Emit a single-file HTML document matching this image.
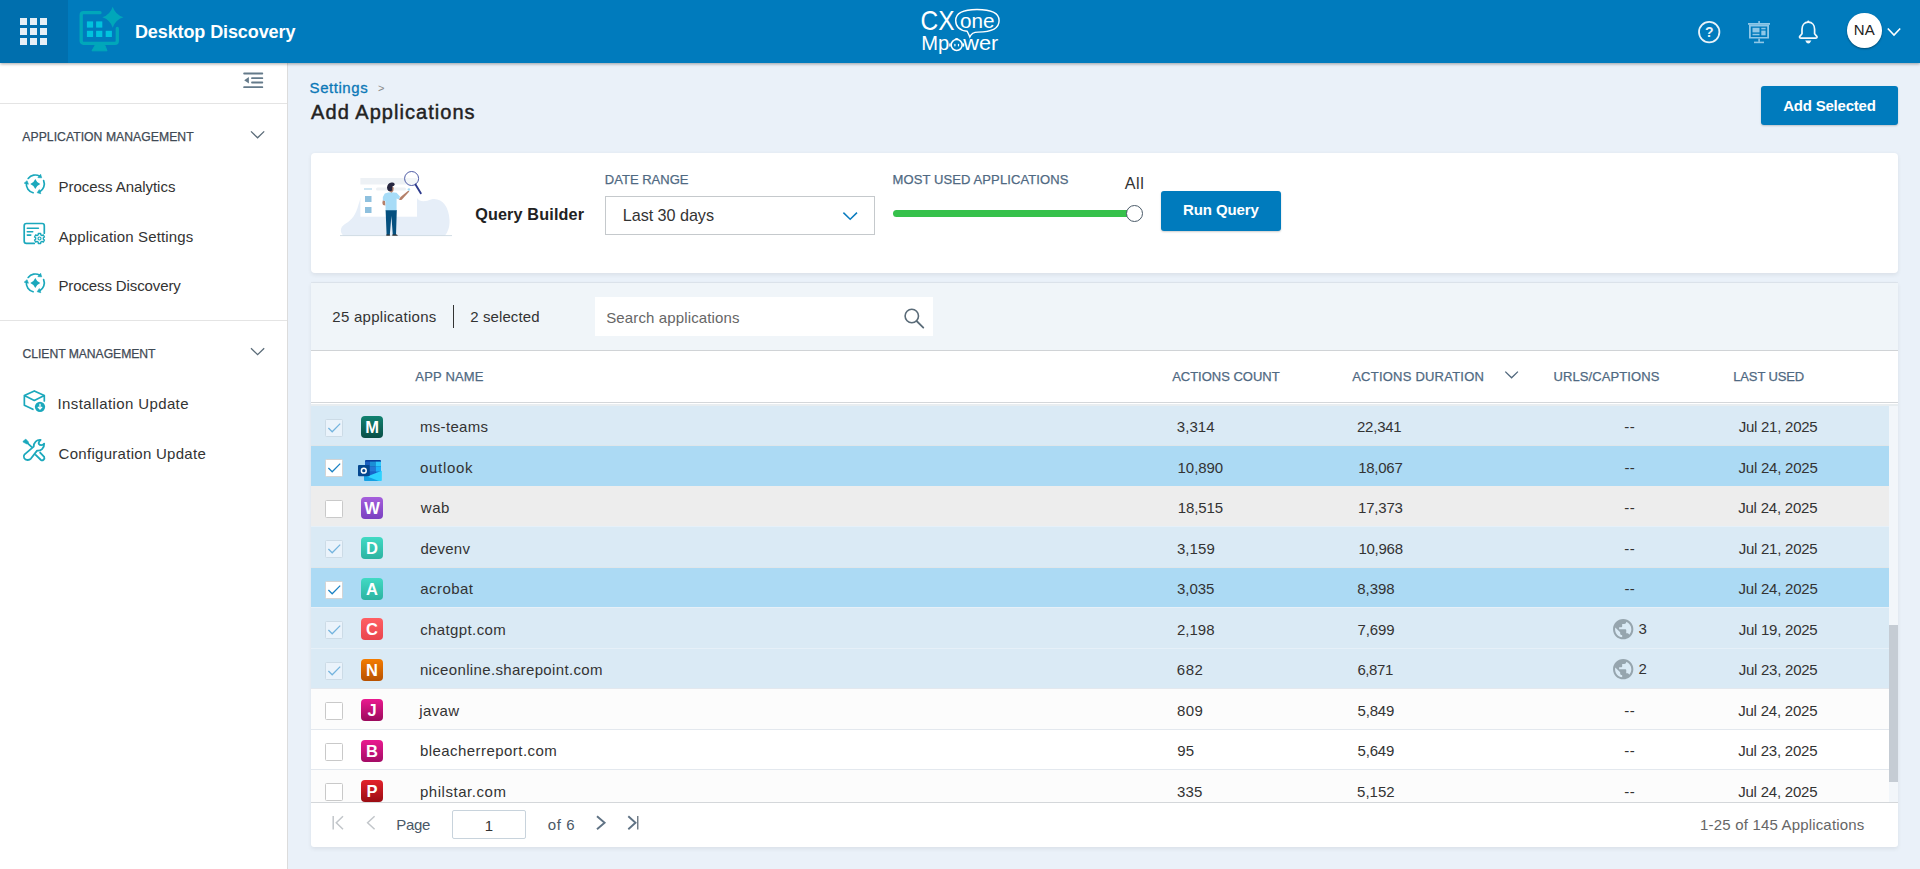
<!DOCTYPE html>
<html lang="en">
<head>
<meta charset="utf-8">
<title>Desktop Discovery - Add Applications</title>
<style>
*{box-sizing:border-box;margin:0;padding:0}
html,body{width:1920px;height:869px;overflow:hidden}
body{font-family:"Liberation Sans","DejaVu Sans",sans-serif;font-size:15px;color:#333;background:#eaf1f9;position:relative}
.abs{position:absolute}
.t{position:absolute;white-space:nowrap;line-height:1}
svg{position:absolute;overflow:visible}
/* header */
#top{position:absolute;left:0;top:0;width:1920px;height:63px;background:#007bbd;box-shadow:0 1px 3px rgba(0,0,0,.35);z-index:5}
#grid{position:absolute;left:0;top:0;width:68px;height:63px;background:#006fae}
#grid i{position:absolute;width:7px;height:7px;background:#e6eff6}
#title{left:136px;top:23px;font-size:18px;font-weight:bold;color:#fff}
#avatar{position:absolute;left:1847px;top:13px;width:34.500px;height:34.500px;border-radius:50%;background:#fff;box-shadow:0 1px 2px rgba(0,0,0,.4)}
#avatar .t{left:0;width:34.500px;text-align:center;top:8.500px;font-size:15px;color:#222}
/* sidebar */
#side{position:absolute;left:0;top:63px;width:288px;height:806px;background:#fff;border-right:1px solid #dcdcdc}
.sec{font-size:12.200px;color:#3f4a55;left:22.500px;-webkit-text-stroke:.25px #3f4a55}
.nav{font-size:15px;color:#333;left:59px}
.hr{position:absolute;left:0;width:287px;height:1px;background:#e4e4e4}
/* main */
#crumb{left:311px;top:80px;font-size:15px;color:#0b78b7;-webkit-text-stroke:.3px #0b78b7}
#crumb2{left:378px;top:82.500px;font-size:11px;color:#888}
#h1{left:311px;top:102px;font-size:20px;color:#222;-webkit-text-stroke:.45px #222}
.btn{position:absolute;background:#007bbd}
.bt{color:#fff;font-weight:bold;font-size:15px}
.card{position:absolute;background:#fff;border-radius:4px;box-shadow:0 1.500px 4px rgba(0,0,0,.07)}
.lbl{font-size:13px;color:#4f6982;-webkit-text-stroke:.25px #4f6982}
.th{font-size:13px;color:#4f6982;top:370px;-webkit-text-stroke:.25px #4f6982}
#rows{position:absolute;left:311px;top:404.800px;width:1578px;height:397.200px;overflow:hidden}
.row{position:absolute;left:0;width:1578px;height:40.500px;border-top:1px solid #e1e8ed}
.r-dis{background:#daeaf5;border-top-color:#e6f0f8}.r-sel{background:#acdaf4;border-top-color:#dfe6ea}.r-hov{background:#ededed;border-top-color:#ededed}.r-n0{background:#fff;border-top-color:#e3e8ee}.r-n1{background:#fcfcfc;border-top-color:#e3e8ee}
.row .t{top:13.300px;font-size:15px;color:#333}
.cn{left:110px}.cc{left:867px}.cd{left:1047px}.cu{left:1314.500px}.cu2{left:1328px;margin-top:-1px}.cl{left:1428px}
.cb{position:absolute;left:14px;top:13px;width:18px;height:18px;background:#fff;border:1px solid #c9c9c9;border-radius:1.500px}
.cb svg{left:-1px;top:-1px;width:18px;height:18px}
.cb-dis{background:#eaf3fb;border-color:#ccdbe6}
.cb-sel{border-color:#d4d4d4}
.ic{position:absolute;left:50px;top:10px;width:22px;height:22px;border-radius:4px;color:#fff;font-weight:bold;font-size:16.500px;text-align:center;line-height:22px}
.olk{left:47px;top:14px;width:24px;height:22px}
.globe{left:1299.500px;top:8.500px;width:24.400px;height:24.400px}
.row:first-child{border-top-color:#e8edf0}
#addsel{letter-spacing:-0.211px;margin-left:1.160px}
#all{letter-spacing:0.556px;margin-left:0.230px}
#app25{letter-spacing:0.279px;margin-left:-0.700px}
#crumb{letter-spacing:0.556px;margin-left:-1.430px}
#dr{letter-spacing:0.016px;margin-left:-1.190px}
#h1{letter-spacing:1.042px;margin-left:0.120px}
#l30{letter-spacing:-0.052px;margin-left:-0.720px}
#mua{letter-spacing:0.113px;margin-left:-1.040px}
#navAS{letter-spacing:0.144px;margin-left:-0.290px}
#navCU{letter-spacing:0.288px;margin-left:-0.450px}
#navIU{letter-spacing:0.375px;margin-left:-1.500px}
#navPA{letter-spacing:-0.041px;margin-left:-0.530px}
#navPD{letter-spacing:-0.111px;margin-left:-0.620px}
#of6{letter-spacing:0.580px;margin-left:-0.220px}
#page{letter-spacing:-0.291px;margin-left:-0.740px}
#qb{letter-spacing:0.152px;margin-left:-0.330px}
#r0c{letter-spacing:0.036px;margin-left:-1.180px}
#r0d{letter-spacing:-0.230px;margin-left:-1.040px}
#r0l{letter-spacing:-0.240px;margin-left:-0.380px}
#r0n{letter-spacing:0.340px;margin-left:-1.120px}
#r0u{letter-spacing:0.582px;margin-left:-1.340px}
#r1c{letter-spacing:-0.072px;margin-left:-0.410px}
#r1d{letter-spacing:-0.272px;margin-left:0.230px}
#r1l{letter-spacing:-0.227px;margin-left:-0.490px}
#r1n{letter-spacing:0.652px;margin-left:-0.900px}
#r1u{letter-spacing:0.168px;margin-left:-0.990px}
#r2c{letter-spacing:-0.102px;margin-left:-0.270px}
#r2d{letter-spacing:-0.215px;margin-left:0.060px}
#r2l{letter-spacing:-0.211px;margin-left:-0.840px}
#r2n{letter-spacing:0.493px;margin-left:-0.160px}
#r2u{letter-spacing:0.589px;margin-left:-1.390px}
#r3c{letter-spacing:0.098px;margin-left:-1.130px}
#r3d{letter-spacing:-0.256px;margin-left:0.440px}
#r3l{letter-spacing:-0.240px;margin-left:-0.380px}
#r3n{letter-spacing:0.220px;margin-left:-0.580px}
#r3u{letter-spacing:0.582px;margin-left:-1.340px}
#r4c{letter-spacing:-0.020px;margin-left:-1.060px}
#r4d{letter-spacing:-0.022px;margin-left:-0.760px}
#r4l{letter-spacing:-0.227px;margin-left:-0.490px}
#r4n{letter-spacing:0.411px;margin-left:-0.690px}
#r4u{letter-spacing:0.168px;margin-left:-0.990px}
#r5c{letter-spacing:-0.004px;margin-left:-1.050px}
#r5d{letter-spacing:-0.132px;margin-left:-0.430px}
#r5l{letter-spacing:-0.240px;margin-left:-0.380px}
#r5n{letter-spacing:0.383px;margin-left:-0.770px}
#r5u{letter-spacing:0.000px;margin-left:-0.630px}
#r6c{letter-spacing:0.511px;margin-left:-1.150px}
#r6d{letter-spacing:-0.431px;margin-left:-0.550px}
#r6l{letter-spacing:-0.240px;margin-left:-0.380px}
#r6n{letter-spacing:0.345px;margin-left:-1.120px}
#r6u{letter-spacing:0.000px;margin-left:-0.490px}
#r7c{letter-spacing:0.396px;margin-left:-1.090px}
#r7d{letter-spacing:-0.186px;margin-left:-0.490px}
#r7l{letter-spacing:-0.211px;margin-left:-0.840px}
#r7n{letter-spacing:0.367px;margin-left:-1.760px}
#r7u{letter-spacing:0.591px;margin-left:-1.390px}
#r8c{letter-spacing:0.326px;margin-left:-0.870px}
#r8d{letter-spacing:-0.186px;margin-left:-0.490px}
#r8l{letter-spacing:-0.211px;margin-left:-0.840px}
#r8n{letter-spacing:0.448px;margin-left:-1.090px}
#r8u{letter-spacing:0.585px;margin-left:-1.390px}
#r9c{letter-spacing:0.229px;margin-left:-1.100px}
#r9d{letter-spacing:-0.007px;margin-left:-0.930px}
#r9l{letter-spacing:-0.211px;margin-left:-0.840px}
#r9n{letter-spacing:0.538px;margin-left:-1.080px}
#r9u{letter-spacing:0.591px;margin-left:-1.390px}
#rq{letter-spacing:-0.096px;margin-left:-0.000px}
#search{letter-spacing:0.132px;margin-left:-0.780px}
#secA{letter-spacing:0.043px;margin-left:-0.210px}
#secC{letter-spacing:-0.055px;margin-left:0.070px}
#sel2{letter-spacing:0.109px;margin-left:-0.320px}
#thAC{letter-spacing:-0.006px;margin-left:0.150px}
#thAD{letter-spacing:0.222px;margin-left:0.230px}
#thAN{letter-spacing:0.172px;margin-left:0.370px}
#thLU{letter-spacing:-0.135px;margin-left:-1.280px}
#thUC{letter-spacing:0.087px;margin-left:-0.930px}
#title{letter-spacing:-0.097px;margin-left:-1.100px}
#total{letter-spacing:0.177px;margin-left:-0.910px}
</style>
</head>
<body>
<div id="top">
  <div id="grid">
    <i style="left:20px;top:18px"></i><i style="left:30px;top:18px"></i><i style="left:40px;top:18px"></i>
    <i style="left:20px;top:28px"></i><i style="left:30px;top:28px"></i><i style="left:40px;top:28px"></i>
    <i style="left:20px;top:38px"></i><i style="left:30px;top:38px"></i><i style="left:40px;top:38px"></i>
  </div>
  <svg id="appicon" style="left:76px;top:4px" width="52" height="52" viewBox="76 4 52 52">
    <path d="M100 12.700 H83.500 a2.300 2.300 0 0 0 -2.300 2.300 V41 a2.300 2.300 0 0 0 2.300 2.300 H115 a2.300 2.300 0 0 0 2.300 -2.300 V28.500" fill="none" stroke="#00a7ba" stroke-width="3.300" stroke-linecap="round"/>
    <path d="M95.500 44.500 H104.500 L107 50.800 H92 Z" fill="#00a7ba" stroke="#00a7ba" stroke-width="1" stroke-linejoin="round"/>
    <path d="M112.700 6.800 Q115.200 14.800 123.500 17.300 Q115.200 19.800 112.700 27.800 Q110.200 19.800 102.400 17.300 Q110.200 14.800 112.700 6.800 Z" fill="#00a7ba"/>
    <g fill="#00c3dd"><rect x="86.900" y="21.400" width="6.200" height="6.200"/><rect x="96.100" y="21.400" width="6.200" height="6.200"/>
    <rect x="86.900" y="30.800" width="6.200" height="6.200"/><rect x="96.100" y="30.800" width="6.200" height="6.200"/><rect x="105.700" y="30.800" width="6.200" height="6.200"/></g>
  </svg>
  <div class="t" id="title">Desktop Discovery</div>

  <svg id="logo" style="left:915px;top:4px" width="90" height="52" viewBox="915 4 90 52" fill="#fff" font-family="Liberation Sans, sans-serif">
    <text x="920.500" y="29.800" font-size="28" textLength="34" lengthAdjust="spacingAndGlyphs">CX</text>
    <path d="M977 9.500 C963 9.500 955.700 13 955.700 20.500 C955.700 27 960 30.500 967.200 31.300 C968.200 33 969 35.200 969.800 37 C971 34 973.500 32.100 978 32.100 C992 32.100 999.100 28.500 999.100 20.500 C999.100 13 992 9.500 977 9.500 Z" fill="none" stroke="#fff" stroke-width="1.400"/>
    <text x="960" y="27.600" font-size="21" textLength="34.500" lengthAdjust="spacingAndGlyphs">one</text>
    <text x="921.300" y="49.700" font-size="20" textLength="28" lengthAdjust="spacingAndGlyphs">Mp</text>
    <circle cx="956.700" cy="45" r="5.500" fill="none" stroke="#fff" stroke-width="1.500"/>
    <rect x="949.200" y="43.200" width="1.500" height="3.600" rx=".75"/><rect x="962.700" y="43.200" width="1.500" height="3.600" rx=".75"/>
    <path d="M954.900 39.600 Q956.700 37.300 958.500 39.600" fill="none" stroke="#fff" stroke-width="1.100"/>
    <rect x="954.300" y="43.800" width="1.200" height="2.600" rx=".6"/><rect x="957.900" y="43.800" width="1.200" height="2.600" rx=".6"/>
    <text x="963.300" y="49.700" font-size="20" textLength="35" lengthAdjust="spacingAndGlyphs">wer</text>
  </svg>

  <svg id="help" style="left:1697px;top:20px" width="24" height="24" viewBox="1697 20 24 24">
    <circle cx="1709.200" cy="32.100" r="10.200" fill="none" stroke="#e8f2f9" stroke-width="1.800"/>
    <text x="1709.200" y="37.100" font-size="14" font-weight="bold" text-anchor="middle" fill="#e8f2f9" font-family="Liberation Sans, sans-serif">?</text>
  </svg>
  <svg id="pres" style="left:1747px;top:20px" width="24" height="24" viewBox="1747 20 24 24" fill="#8fc7e7">
    <rect x="1758.300" y="21" width="1.600" height="2.500"/>
    <rect x="1748" y="23" width="22" height="1.800"/>
    <path d="M1749 24.800 H1769 V38.600 H1749 Z M1750.800 26.400 V37 H1767.200 V26.400 Z" fill-rule="evenodd"/>
    <rect x="1752.500" y="27.800" width="7" height="4.600"/><rect x="1752.500" y="33.800" width="7" height="1.500"/>
    <rect x="1761.300" y="27.800" width="4.300" height="1.500"/><rect x="1761.300" y="30.600" width="4.300" height="4.700"/>
    <rect x="1758.300" y="38.600" width="1.600" height="3.300"/><rect x="1754" y="41.600" width="10" height="1.600"/>
  </svg>
  <svg id="bell" style="left:1797px;top:20px" width="24" height="24" viewBox="1797 20 24 24">
    <path d="M1808.300 22.200 C1804.300 22.200 1802 25.300 1802 29.300 V33.800 L1799.600 36.600 Q1799.300 38.200 1801 38.200 H1815.600 Q1817.300 38.200 1817 36.600 L1814.600 33.800 V29.300 C1814.600 25.300 1812.300 22.200 1808.300 22.200 Z" fill="none" stroke="#f2f8fc" stroke-width="1.700" stroke-linejoin="round"/>
    <path d="M1805.200 40.400 H1811.400 Q1810 43.600 1808.300 43.600 Q1806.600 43.600 1805.200 40.400 Z" fill="#f2f8fc"/>
    <circle cx="1808.300" cy="21.700" r="1.100" fill="#f2f8fc"/>
  </svg>
  <div id="avatar"><div class="t">NA</div></div>
  <svg style="left:1887px;top:27px" width="14" height="10" viewBox="1887 27 14 10"><path d="M1887.800 28.500 L1894 35 L1900.200 28.500" fill="none" stroke="#fff" stroke-width="1.600"/></svg>
</div>

<div id="side">
  <!-- coords inside sidebar are page y - 63 -->
  <svg style="left:242px;top:8px" width="22" height="18" viewBox="242 71 22 18" fill="#647a8a">
    <rect x="243.200" y="72.600" width="20" height="1.900" rx=".9"/><rect x="251.100" y="77.200" width="12.100" height="1.900" rx=".9"/><rect x="251.100" y="81.600" width="12.100" height="1.900" rx=".9"/><rect x="243.200" y="86.200" width="20" height="1.900" rx=".9"/>
    <path d="M244.200 80.300 L248.900 77.100 V83.600 Z"/>
  </svg>
  <div class="hr" style="top:40px"></div>
  <div class="t sec" id="secA" style="top:68px">APPLICATION MANAGEMENT</div>
  <svg style="left:250px;top:67px" width="16" height="10" viewBox="250 130 16 10"><path d="M251 131.400 L257.600 137.800 L264.200 131.400" fill="none" stroke="#5a6b78" stroke-width="1.300"/></svg>
  <div class="t nav" id="navPA" style="top:116px">Process Analytics</div>
  <div class="t nav" id="navAS" style="top:166px">Application Settings</div>
  <div class="t nav" id="navPD" style="top:215px">Process Discovery</div>
  <div class="hr" style="top:257px"></div>
  <div class="t sec" id="secC" style="top:285px">CLIENT MANAGEMENT</div>
  <svg style="left:250px;top:284px" width="16" height="10" viewBox="250 347 16 10"><path d="M251 348.300 L257.600 354.700 L264.200 348.300" fill="none" stroke="#5a6b78" stroke-width="1.300"/></svg>
  <div class="t nav" id="navIU" style="top:333px">Installation Update</div>
  <div class="t nav" id="navCU" style="top:383px">Configuration Update</div>
</div>

<div class="t" id="crumb">Settings</div>
<div class="t" id="crumb2">&gt;</div>
<div class="t" id="h1">Add Applications</div>
<div class="btn" style="left:1761px;top:86px;width:137px;height:39px;border-radius:3px;box-shadow:0 1px 2px rgba(0,0,0,.2)"></div><div class="t bt" id="addsel" style="left:1782px;top:98px">Add Selected</div>

<div class="card" style="left:311px;top:153px;width:1587px;height:120px"></div>
<div class="t" id="qb" style="left:475.500px;top:206px;font-size:16.200px;font-weight:bold;color:#222">Query Builder</div>
<div class="t lbl" id="dr" style="left:606px;top:172.700px">DATE RANGE</div>
<div class="abs" style="left:605px;top:196px;width:270px;height:39px;border:1px solid #c5c9cc;background:#fff"></div>
<div class="t" id="l30" style="left:623.500px;top:206.500px;font-size:16.200px;color:#333">Last 30 days</div>
<svg style="left:842px;top:211px" width="16" height="10" viewBox="842 211 16 10"><path d="M843.400 212.600 L850.200 219.300 L857 212.600" fill="none" stroke="#0b7cbf" stroke-width="1.500"/></svg>
<div class="t lbl" id="mua" style="left:893.500px;top:172.700px">MOST USED APPLICATIONS</div>
<div class="t" id="all" style="left:1124.500px;top:175px;font-size:16.200px;color:#333">All</div>
<div class="abs" style="left:893px;top:210px;width:241px;height:7px;border-radius:3.500px;background:#36c14b"></div>
<div class="abs" style="left:1126px;top:205px;width:17px;height:17px;border-radius:50%;background:#fff;border:1.500px solid #4a5a68"></div>
<div class="btn" style="left:1161px;top:191px;width:120px;height:39.500px;border-radius:3px;box-shadow:0 1px 2px rgba(0,0,0,.2)"></div><div class="t bt" id="rq" style="left:1183px;top:202.300px">Run Query</div>

<div class="abs" style="left:311px;top:282px;width:1587px;height:1px;background:rgba(0,0,0,.045)"></div>
<div class="card" style="left:311px;top:283px;width:1587px;height:564px;overflow:hidden;border-radius:0 0 3px 3px">
  <div class="abs" style="left:0;top:0;width:1587px;height:68px;background:#f0f5f9;border-bottom:1px solid #d0d3d6"></div>
  <div class="abs" style="left:0;top:119px;width:1587px;height:1px;background:#d4d7da"></div>
  <div class="abs" style="left:0;top:121px;width:1587px;height:2px;background:#e8edf0"></div>
  <div class="abs" style="left:1578px;top:123px;width:9px;height:396px;background:#f2f6fa"></div>
  <div class="abs" style="left:1578px;top:342px;width:9px;height:157px;background:#c5ccd4"></div>
  <div class="abs" style="left:0;top:519px;width:1587px;height:1px;background:#d4d7da"></div>
</div>
<div class="t" id="app25" style="left:333px;top:309px;font-size:15px;color:#333">25 applications</div>
<div class="abs" style="left:453px;top:305px;width:1px;height:23px;background:#333"></div>
<div class="t" id="sel2" style="left:470.500px;top:309px;font-size:15px;color:#333">2 selected</div>
<div class="abs" style="left:595px;top:297px;width:338px;height:39px;background:#fff"></div>
<div class="t" id="search" style="left:607px;top:310px;font-size:15px;color:#666">Search applications</div>
<svg style="left:903px;top:307px" width="22" height="22" viewBox="903 307 22 22"><circle cx="911.800" cy="316" r="6.700" fill="none" stroke="#5a6b78" stroke-width="1.600"/><path d="M916.600 321 L923.300 327.600" stroke="#5a6b78" stroke-width="1.800" stroke-linecap="round"/></svg>

<div class="t th" id="thAN" style="left:415px">APP NAME</div>
<div class="t th" id="thAC" style="left:1172px">ACTIONS COUNT</div>
<div class="t th" id="thAD" style="left:1352px">ACTIONS DURATION</div>
<svg style="left:1504px;top:370px" width="16" height="10" viewBox="1504 370 16 10"><path d="M1505.300 371.600 L1511.600 377.800 L1517.900 371.600" fill="none" stroke="#50677c" stroke-width="1.300"/></svg>
<div class="t th" id="thUC" style="left:1554.500px">URLS/CAPTIONS</div>
<div class="t th" id="thLU" style="left:1734.500px">LAST USED</div>

<div id="rows">
<div class="row r-dis" style="top:0.0px">
<div class="cb cb-dis"><svg viewBox="0 0 18 18"><path d="M3.400 9 L7.200 12.800 L15.200 4.600" fill="none" stroke="#74b4de" stroke-width="1.250"/></svg></div><div class="ic" style="background:linear-gradient(180deg,#108270,#0a4e46)"><span id="r0i">M</span></div>
<div class="t cn" id="r0n">ms-teams</div><div class="t cc" id="r0c">3,314</div><div class="t cd" id="r0d">22,341</div><div class="t cu" id="r0u">--</div><div class="t cl" id="r0l">Jul 21, 2025</div>
</div>
<div class="row r-sel" style="top:40.5px">
<div class="cb cb-sel"><svg viewBox="0 0 18 18"><path d="M3.400 9 L7.200 12.800 L15.200 4.600" fill="none" stroke="#1a82c4" stroke-width="1.250"/></svg></div><svg class="olk" viewBox="0 0 24 22" width="24" height="22">
<rect x="7" y="0" width="16" height="20" rx="1" fill="#0a3f9c"/>
<rect x="7" y="1.6" width="5" height="5" fill="#1a5fc0"/><rect x="12" y="1.6" width="5.6" height="5" fill="#1b8fd6"/><rect x="17.6" y="1.600" width="5.4" height="5" fill="#2cc8fb"/>
<rect x="7" y="6.6" width="5" height="5.2" fill="#1a5fc0"/><rect x="12" y="6.6" width="5.6" height="5.2" fill="#2378d6"/><rect x="17.6" y="6.600" width="5.4" height="5.2" fill="#1eb0fa"/>
<rect x="7" y="11.8" width="5" height="5" fill="#174fb0"/><rect x="12" y="11.8" width="5.6" height="5" fill="#1765c8"/><rect x="17.6" y="11.8" width="5.4" height="5" fill="#1a6fd6"/>
<path d="M6 14.500 L23.800 21 H7 a1 1 0 0 1 -1 -1 Z" fill="#13a1e4"/>
<path d="M23.800 10.800 L23.800 20 a1 1 0 0 1 -1 1 L21 21 L9 16.600 Z" fill="#2dd2ff"/>
<rect x="0" y="5" width="11.6" height="11.3" rx="1" fill="#04478f"/>
<circle cx="5.800" cy="10.700" r="2.400" fill="none" stroke="#fff" stroke-width="1.500"/>
</svg>
<div class="t cn" id="r1n">outlook</div><div class="t cc" id="r1c">10,890</div><div class="t cd" id="r1d">18,067</div><div class="t cu" id="r1u">--</div><div class="t cl" id="r1l">Jul 24, 2025</div>
</div>
<div class="row r-hov" style="top:81.0px">
<div class="cb"></div><div class="ic" style="background:linear-gradient(180deg,#a55fdc,#7a40c0)"><span id="r2i">W</span></div>
<div class="t cn" id="r2n">wab</div><div class="t cc" id="r2c">18,515</div><div class="t cd" id="r2d">17,373</div><div class="t cu" id="r2u">--</div><div class="t cl" id="r2l">Jul 24, 2025</div>
</div>
<div class="row r-dis" style="top:121.5px">
<div class="cb cb-dis"><svg viewBox="0 0 18 18"><path d="M3.400 9 L7.200 12.800 L15.200 4.600" fill="none" stroke="#74b4de" stroke-width="1.250"/></svg></div><div class="ic" style="background:linear-gradient(180deg,#41dac4,#2cb3a1)"><span id="r3i">D</span></div>
<div class="t cn" id="r3n">devenv</div><div class="t cc" id="r3c">3,159</div><div class="t cd" id="r3d">10,968</div><div class="t cu" id="r3u">--</div><div class="t cl" id="r3l">Jul 21, 2025</div>
</div>
<div class="row r-sel" style="top:162.0px">
<div class="cb cb-sel"><svg viewBox="0 0 18 18"><path d="M3.400 9 L7.200 12.800 L15.200 4.600" fill="none" stroke="#1a82c4" stroke-width="1.250"/></svg></div><div class="ic" style="background:linear-gradient(180deg,#41dac4,#2cb3a1)"><span id="r4i">A</span></div>
<div class="t cn" id="r4n">acrobat</div><div class="t cc" id="r4c">3,035</div><div class="t cd" id="r4d">8,398</div><div class="t cu" id="r4u">--</div><div class="t cl" id="r4l">Jul 24, 2025</div>
</div>
<div class="row r-dis" style="top:202.5px">
<div class="cb cb-dis"><svg viewBox="0 0 18 18"><path d="M3.400 9 L7.200 12.800 L15.200 4.600" fill="none" stroke="#74b4de" stroke-width="1.250"/></svg></div><div class="ic" style="background:linear-gradient(180deg,#ff5f63,#e9454d)"><span id="r5i">C</span></div>
<div class="t cn" id="r5n">chatgpt.com</div><div class="t cc" id="r5c">2,198</div><div class="t cd" id="r5d">7,699</div><svg class="globe" viewBox="0 0 24 24"><path fill="#96a5ae" d="M12 2C6.48 2 2 6.48 2 12s4.48 10 10 10 10-4.48 10-10S17.52 2 12 2zm-1 17.93c-3.95-.49-7-3.85-7-7.93 0-.62.08-1.21.21-1.79L9 15v1c0 1.1.9 2 2 2v1.930zm6.9-2.54c-.26-.81-1-1.39-1.900-1.390h-1v-3c0-.55-.45-1-1-1H8v-2h2c.55 0 1-.45 1-1V7h2c1.100 0 2-.9 2-2v-.41c2.930 1.190 5 4.060 5 7.410 0 2.080-.8 3.970-2.100 5.390z"/></svg><div class="t cu2" id="r5u">3</div><div class="t cl" id="r5l">Jul 19, 2025</div>
</div>
<div class="row r-dis" style="top:243.0px">
<div class="cb cb-dis"><svg viewBox="0 0 18 18"><path d="M3.400 9 L7.200 12.800 L15.200 4.600" fill="none" stroke="#74b4de" stroke-width="1.250"/></svg></div><div class="ic" style="background:linear-gradient(180deg,#f47c00,#b75100)"><span id="r6i">N</span></div>
<div class="t cn" id="r6n">niceonline.sharepoint.com</div><div class="t cc" id="r6c">682</div><div class="t cd" id="r6d">6,871</div><svg class="globe" viewBox="0 0 24 24"><path fill="#96a5ae" d="M12 2C6.48 2 2 6.48 2 12s4.48 10 10 10 10-4.48 10-10S17.52 2 12 2zm-1 17.93c-3.95-.49-7-3.85-7-7.93 0-.62.08-1.21.21-1.79L9 15v1c0 1.1.9 2 2 2v1.930zm6.9-2.54c-.26-.81-1-1.39-1.900-1.390h-1v-3c0-.55-.45-1-1-1H8v-2h2c.55 0 1-.45 1-1V7h2c1.100 0 2-.9 2-2v-.41c2.930 1.190 5 4.060 5 7.410 0 2.080-.8 3.970-2.100 5.390z"/></svg><div class="t cu2" id="r6u">2</div><div class="t cl" id="r6l">Jul 23, 2025</div>
</div>
<div class="row r-n1" style="top:283.5px">
<div class="cb"></div><div class="ic" style="background:linear-gradient(180deg,#ea1a90,#9b0a5c)"><span id="r7i">J</span></div>
<div class="t cn" id="r7n">javaw</div><div class="t cc" id="r7c">809</div><div class="t cd" id="r7d">5,849</div><div class="t cu" id="r7u">--</div><div class="t cl" id="r7l">Jul 24, 2025</div>
</div>
<div class="row r-n0" style="top:324.0px">
<div class="cb"></div><div class="ic" style="background:linear-gradient(180deg,#ea1a90,#a40c66)"><span id="r8i">B</span></div>
<div class="t cn" id="r8n">bleacherreport.com</div><div class="t cc" id="r8c">95</div><div class="t cd" id="r8d">5,649</div><div class="t cu" id="r8u">--</div><div class="t cl" id="r8l">Jul 23, 2025</div>
</div>
<div class="row r-n1" style="top:364.5px">
<div class="cb"></div><div class="ic" style="background:linear-gradient(180deg,#e3222c,#9a0c13)"><span id="r9i">P</span></div>
<div class="t cn" id="r9n">philstar.com</div><div class="t cc" id="r9c">335</div><div class="t cd" id="r9d">5,152</div><div class="t cu" id="r9u">--</div><div class="t cl" id="r9l">Jul 24, 2025</div>
</div>
</div>

<!-- pagination -->
<svg style="left:331px;top:815px" width="14" height="16" viewBox="331 815 14 16"><path d="M333.200 816 V829.600 M343 816.300 L336.300 822.800 L343 829.300" fill="none" stroke="#c2c6ca" stroke-width="1.500"/></svg>
<svg style="left:364px;top:815px" width="14" height="16" viewBox="364 815 14 16"><path d="M374.600 816.300 L367.600 822.800 L374.600 829.300" fill="none" stroke="#c2c6ca" stroke-width="1.500"/></svg>
<div class="t" id="page" style="left:397px;top:816.500px;font-size:15px;color:#4a5866">Page</div>
<div class="abs" style="left:452px;top:810px;width:74px;height:28.500px;border:1px solid #c8d3dc;border-radius:2px;background:#fff"></div>
<div class="t" style="left:452px;width:74px;text-align:center;top:817.500px;font-size:15px;color:#333">1</div>
<div class="t" id="of6" style="left:548px;top:816.500px;font-size:15px;color:#4a5866">of 6</div>
<svg style="left:594px;top:815px" width="14" height="16" viewBox="594 815 14 16"><path d="M597 816.300 L604.600 822.800 L597 829.300" fill="none" stroke="#5f7284" stroke-width="1.900"/></svg>
<svg style="left:626px;top:815px" width="14" height="16" viewBox="626 815 14 16"><path d="M628.300 816.300 L635.500 822.800 L628.300 829.300" fill="none" stroke="#5f7284" stroke-width="1.900"/><path d="M637.800 816 V829.600" fill="none" stroke="#44525f" stroke-width="1.100"/></svg>
<div class="t" id="total" style="left:1701px;top:817px;font-size:15px;color:#666">1-25 of 145 Applications</div>
<svg id="ov" style="left:0;top:0;z-index:9" width="1920" height="869" viewBox="0 0 1920 869">
<path d="M28.21 178.46 A9.0 9.0 0 0 1 39.80 176.21" fill="none" stroke="#1ba8bc" stroke-width="1.700" stroke-linecap="round"/>
<path d="M41.69 177.82 L40.60 174.18 L37.89 177.64 Z" fill="#1ba8bc" stroke="#1ba8bc" stroke-width=".6" stroke-linejoin="round"/>
<path d="M43.64 180.63 A9.0 9.0 0 0 1 39.53 191.95" fill="none" stroke="#1ba8bc" stroke-width="1.700" stroke-linecap="round"/>
<path d="M37.16 192.69 L40.82 193.70 L39.32 189.57 Z" fill="#1ba8bc" stroke="#1ba8bc" stroke-width=".6" stroke-linejoin="round"/>
<path d="M33.12 192.73 A9.0 9.0 0 0 1 26.35 183.06" fill="none" stroke="#1ba8bc" stroke-width="1.700" stroke-linecap="round"/>
<path d="M27.06 180.68 L24.17 183.15 L28.44 184.22 Z" fill="#1ba8bc" stroke="#1ba8bc" stroke-width=".6" stroke-linejoin="round"/>
<path d="M35.30 179.00 Q36.65 182.65 40.30 184.00 Q36.65 185.35 35.30 189.00 Q33.95 185.35 30.30 184.00 Q33.95 182.65 35.30 179.00 Z" fill="#1ba8bc"/>
<path d="M28.21 277.46 A9.0 9.0 0 0 1 39.80 275.21" fill="none" stroke="#1ba8bc" stroke-width="1.700" stroke-linecap="round"/>
<path d="M41.69 276.82 L40.60 273.18 L37.89 276.64 Z" fill="#1ba8bc" stroke="#1ba8bc" stroke-width=".6" stroke-linejoin="round"/>
<path d="M43.64 279.63 A9.0 9.0 0 0 1 39.53 290.95" fill="none" stroke="#1ba8bc" stroke-width="1.700" stroke-linecap="round"/>
<path d="M37.16 291.69 L40.82 292.70 L39.32 288.57 Z" fill="#1ba8bc" stroke="#1ba8bc" stroke-width=".6" stroke-linejoin="round"/>
<path d="M33.12 291.73 A9.0 9.0 0 0 1 26.35 282.06" fill="none" stroke="#1ba8bc" stroke-width="1.700" stroke-linecap="round"/>
<path d="M27.06 279.68 L24.17 282.15 L28.44 283.22 Z" fill="#1ba8bc" stroke="#1ba8bc" stroke-width=".6" stroke-linejoin="round"/>
<path d="M35.30 278.00 Q36.65 281.65 40.30 283.00 Q36.65 284.35 35.30 288.00 Q33.95 284.35 30.30 283.00 Q33.95 281.65 35.30 278.00 Z" fill="#1ba8bc"/>
<path d="M34.200 243.400 H26.400 a2.200 2.200 0 0 1 -2.200 -2.200 V225.700 a2.200 2.200 0 0 1 2.200 -2.200 H42.100 a2.200 2.200 0 0 1 2.200 2.200 V233.200" fill="none" stroke="#1ba8bc" stroke-width="1.700" stroke-linecap="round"/>
<path d="M27.300 228.300 H38.400 M27.300 231.800 H32.700 M27.300 235.100 H30.800" fill="none" stroke="#1ba8bc" stroke-width="1.600" stroke-linecap="round"/>
<path d="M38.23 234.81 L38.33 233.43 L40.67 233.43 L40.77 234.81 L42.06 235.56 L43.30 234.95 L44.47 236.98 L43.33 237.76 L43.33 239.24 L44.47 240.02 L43.30 242.05 L42.06 241.44 L40.77 242.19 L40.67 243.57 L38.33 243.57 L38.23 242.19 L36.94 241.44 L35.70 242.05 L34.53 240.02 L35.67 239.24 L35.67 237.76 L34.53 236.98 L35.70 234.95 L36.94 235.56 Z" fill="#fff" stroke="#1ba8bc" stroke-width="1.400" stroke-linejoin="round"/><circle cx="39.5" cy="238.5" r="1.500" fill="none" stroke="#1ba8bc" stroke-width="1.200"/>
<path d="M44.300 400.900 V395.600 L34.300 390.900 L24.350 395.600 V405.200 L32.900 409.300 M24.350 395.600 L34.300 400.400 L44.300 395.600" fill="none" stroke="#1ba8bc" stroke-width="1.700" stroke-linecap="round" stroke-linejoin="round"/>
<circle cx="40" cy="406.850" r="5.150" fill="#1ba8bc"/><path d="M40 403.800 V408.300 M37.900 406.900 L40 409 L42.100 406.900" fill="none" stroke="#fff" stroke-width="1.300"/>
<path d="M 40.63 439.87 C 36.76 439.54 33.54 442.45 33.70 446.63 L 24.35 454.69 C 22.90 456.63 24.19 460.17 27.73 460.01 C 29.35 459.85 30.31 459.20 30.96 458.56 L 37.08 450.66 C 40.63 451.15 44.49 448.25 44.17 443.57 C 42.56 445.67 39.98 445.67 38.85 444.06 C 38.05 442.45 39.34 441.16 40.63 439.87 Z" fill="none" stroke="#1ba8bc" stroke-width="1.800" stroke-linejoin="round"/>
<path d="M 25.80 439.06 L 28.54 441.96 L 28.22 443.57 L 26.61 443.90 L 23.06 442.12 L 23.06 441.16 Z" fill="#1ba8bc" stroke="#1ba8bc" stroke-width=".5" stroke-linejoin="round"/>
<path d="M 27.25 442.93 L 32.09 447.44" fill="none" stroke="#1ba8bc" stroke-width="1.800"/>
<path d="M 35.15 454.37 L 40.95 460.01 C 42.56 461.14 45.14 459.20 44.17 456.95 L 39.66 452.11" fill="none" stroke="#1ba8bc" stroke-width="1.800" stroke-linejoin="round"/>
<g id="illus">
<path d="M343.500 235.500 C339.800 233 340 227.500 344 224.800 C350 221 354.500 217.500 357.500 208 C359 203 360 200 360.500 198 L417 198 C420 203 427 201 431 199.500 C441 197 449 206 449.500 220 C450 228 447 233 445 235.500 Z" fill="#e6eef8"/>
<rect x="360.400" y="178" width="56.600" height="38.700" fill="#fff"/>
<rect x="360.400" y="178" width="56.600" height="6.500" fill="#edf1f5"/>
<rect x="364" y="188" width="8" height="2" fill="#cfe6f3"/><rect x="376" y="187.500" width="30" height="3" rx="1.500" fill="#eef1f4"/>
<rect x="365" y="196" width="6.500" height="6" fill="#8ec0de"/><rect x="365" y="207" width="6.500" height="6" fill="#8ec0de"/>
<path d="M340 235.600 H452" stroke="#c5d3dd" stroke-width=".8"/>
<path d="M385.600 210 H396.800 L396 235 H392.800 L391.400 216 L389.800 235 H386.600 Z" fill="#05507f"/>
<path d="M386.300 234.600 h3.600 v1.200 h-3.600z M392.300 234.600 h4.600 l1 1.200 h-5.600z" fill="#333"/>
<path d="M384.800 193.500 Q390 191.500 396.500 192.800 L400 196.500 L399 199.500 L396.600 198.500 L396.600 210.300 H385.600 L385.400 201 L382.800 200.500 Q382.500 196 384.800 193.500 Z" fill="#a7dcf7"/>
<path d="M399 199.500 L400.500 197 L408.500 190.500 L409.300 191.500 L402 199.500 Q400.500 200.500 399 199.500 Z" fill="#b5806a"/>
<path d="M382.800 200.500 L385 201 L385.300 205.500 L383 205 Q381.800 203 382.800 200.500 Z" fill="#b5806a"/>
<circle cx="408.900" cy="189.500" r="1.300" fill="#a7dcf7"/>
<path d="M391 186.500 Q393.500 186 393.700 188 L393.300 191 L391.500 192.800 L389.500 191.500 Z" fill="#b5806a"/>
<path d="M387 187.500 Q387.500 183 391.500 182.600 Q394.500 182 394.800 184.500 Q394 186.500 392.500 186.300 Q392 188 392.300 190.500 Q390 191.500 388.500 191 Q387 189.500 387 187.500 Z" fill="#26263f"/>
<circle cx="411.600" cy="178.500" r="7" fill="#fff" fill-opacity=".35" stroke="#3b4a9b" stroke-width=".9"/>
<path d="M415.500 184.500 L420.800 193.300" stroke="#2d3a8c" stroke-width="1.900" stroke-linecap="round"/>
</g>
</svg>
</body>
</html>
